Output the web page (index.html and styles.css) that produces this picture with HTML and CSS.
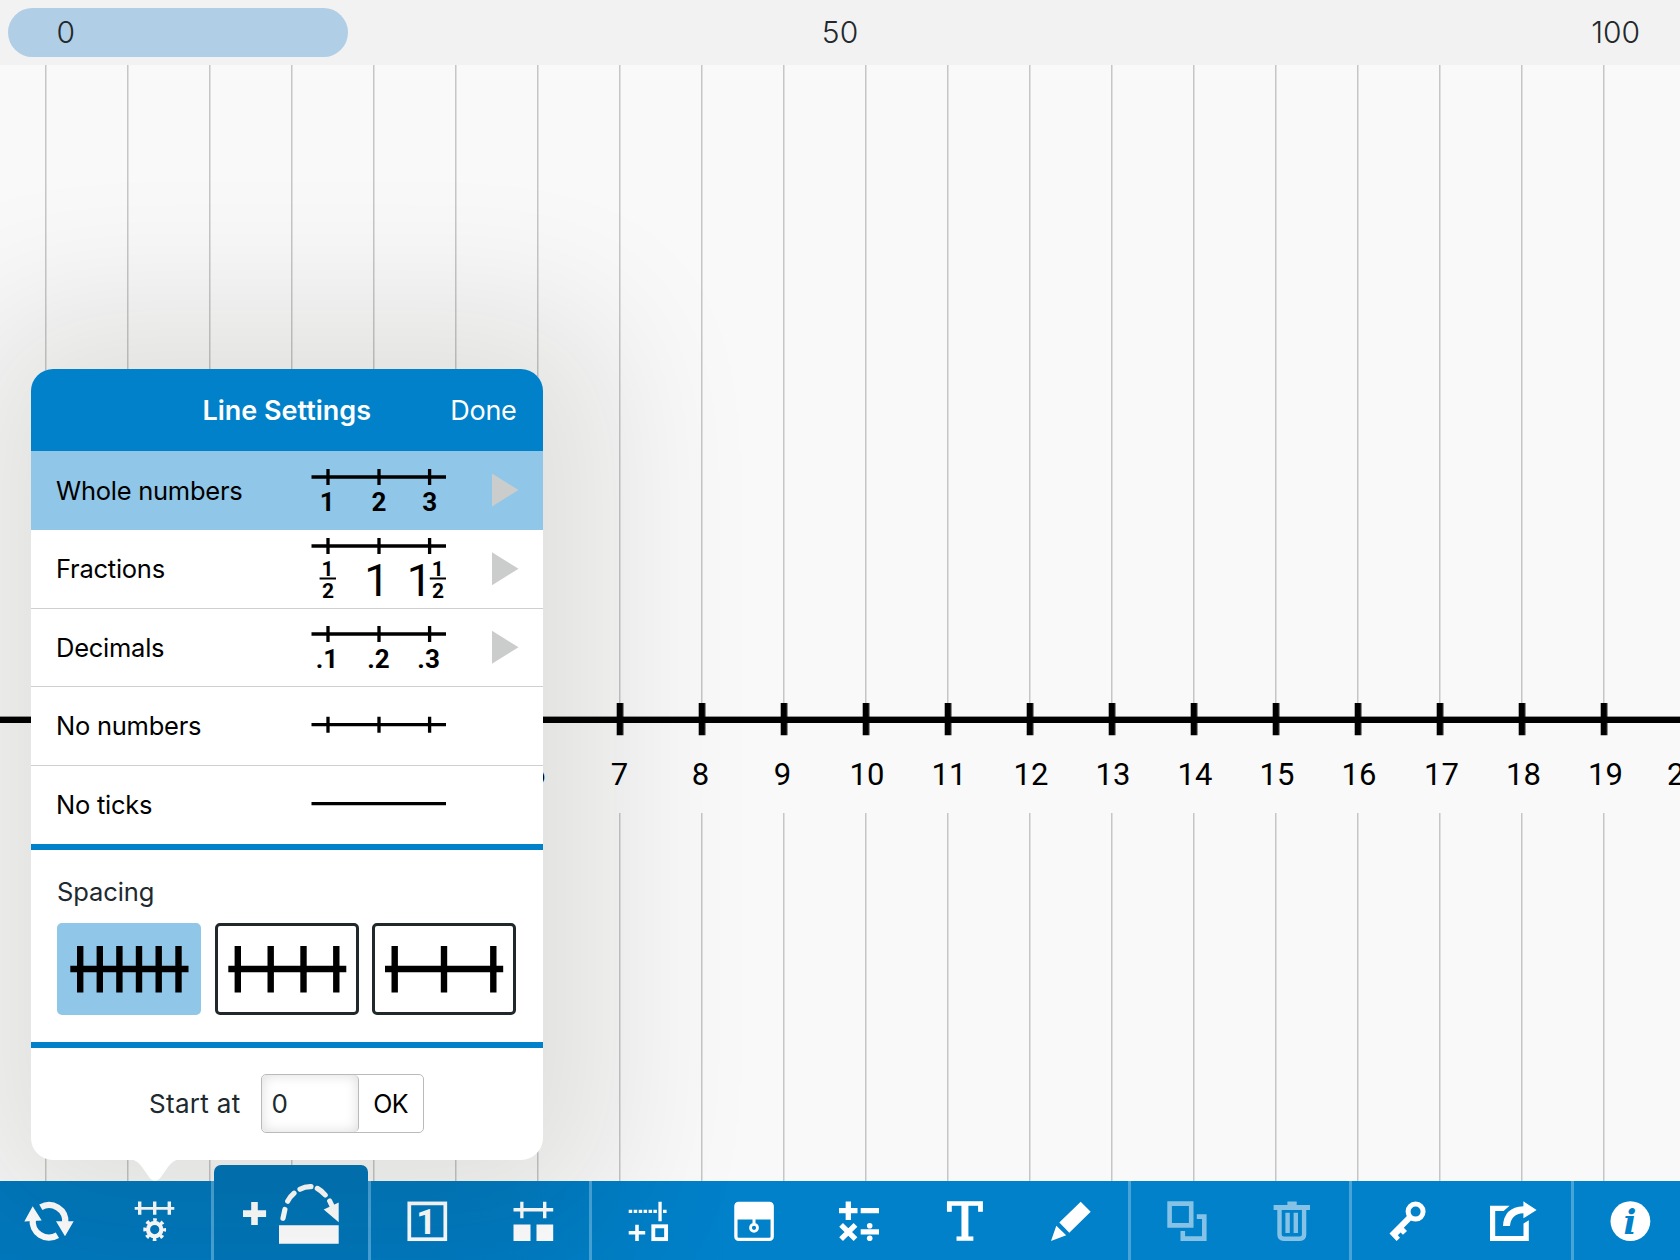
FILE: index.html
```html
<!DOCTYPE html>
<html lang="en">
<head>
<meta charset="utf-8">
<title>Number Line</title>
<link rel="stylesheet" href="styles.css">
</head>
<body>
<div class="app">
  <header class="overview">
    <div class="overview-window"></div>
    <span class="mark mark-start">0</span>
    <span class="mark mark-mid">50</span>
    <span class="mark mark-end">100</span>
  </header>

  <main class="canvas">
    <svg class="line-view" width="1680" height="1116" viewBox="0 65 1680 1116">
      <defs>
        <pattern id="grid" x="45" y="0" width="82" height="1260" patternUnits="userSpaceOnUse"><rect width="1.5" height="1260" fill="#c6c6c6"/></pattern>
        <pattern id="ticks" x="42.7" y="703" width="82" height="33" patternUnits="userSpaceOnUse"><rect width="6.6" height="32.5"/></pattern>
      </defs>
      <rect x="0" y="65" width="1680" height="638" fill="url(#grid)"/>
      <rect x="0" y="813" width="1680" height="368" fill="url(#grid)"/>
      <rect x="0" y="716.6" width="1680" height="6.4"/>
      <rect x="0" y="703" width="1680" height="32.5" fill="url(#ticks)"/>
      <g class="tick-labels">
        <text x="537" y="785">6</text><text x="619.5" y="785">7</text><text x="700.5" y="785">8</text>
        <text x="782.5" y="785">9</text><text x="867" y="785">10</text><text x="949" y="785">11</text>
        <text x="1031" y="785">12</text><text x="1113" y="785">13</text><text x="1195" y="785">14</text>
        <text x="1277" y="785">15</text><text x="1359" y="785">16</text><text x="1441.5" y="785">17</text>
        <text x="1523.5" y="785">18</text><text x="1605.5" y="785">19</text><text x="1684.5" y="785">20</text>
      </g>
    </svg>
  </main>

  <nav class="toolbar">
    <div class="group group-first">
      <svg class="icon" viewBox="0 0 50 40"><g fill="none" stroke="#fff" stroke-width="6.3"><path d="M8.8 18A16.3 16.3 0 0 0 33.4 34.2"/><path d="M16.8 6.3A16.3 16.3 0 0 1 41.2 22"/></g><path d="M8.7 5.3 17.7 19.6.3 20.6zM41 35.3 49.7 20.2 32 20.2z"/></svg>
      <svg class="icon" viewBox="0 0 50 40"><path d="M4.7 6h39.6v2.7H4.7zM8 .5h3.4v13.2H8zM23 .5h3.4v13.2H23zM37.6.5H41v13.2h-3.4z"/><g fill="none" stroke="#fff"><circle cx="24.7" cy="28.6" r="6.7" stroke-width="4.2"/><circle cx="24.7" cy="28.6" r="9.7" stroke-width="3.4" stroke-dasharray="3.6 4.018" stroke-dashoffset="1.8"/></g></svg>
    </div>
    <div class="group group-tab">
      <div class="jump-tab">
        <svg width="154" height="95" viewBox="0 0 154 95"><path d="M37.2 37h6.6v8.2h8.3v6.7h-8.3V60h-6.6v-8.1H29v-6.7h8.2zM65 60.2h59.7v18.5H65z"/><path d="M69 53.3 70.9 44.5M73.7 36.2Q76 31.5 80 28.2M86 24.3Q91 21.5 97 21.7M103.3 23.4Q108 26 111.2 30M115.7 36 119 43" fill="none" stroke="#fff" stroke-width="5.2" stroke-linecap="round"/><path d="M124.7 37.5V57.2L109.7 44.5z"/></svg>
      </div>
    </div>
    <div class="group">
      <svg class="icon" viewBox="0 0 50 40"><rect x="7.3" y="2.4" width="36" height="35.8" fill="none" stroke="#fff" stroke-width="3.7"/><text class="boxed-one" x="24.3" y="33.3">1</text></svg>
      <svg class="icon" viewBox="0 0 50 40"><path d="M5.5 7h39.7v3.4H5.5zM12.2.7h3.3v16.5h-3.3zM35 .7h3.4v16.5H35zM5.5 23.4h17V40h-17zM28.5 23.4h16.7V40H28.5z"/></svg>
    </div>
    <div class="group">
      <svg class="icon" viewBox="0 0 50 40"><path d="M5.7 8.8h3.5v3.3H5.7zM10.7 8.8h3.5v3.3h-3.5zM15.7 8.8h3.5v3.3h-3.5zM20.6 8.8h3.5v3.3h-3.5zM25.6 8.8h3.5v3.3h-3.5zM30.4 8.8h3.5v3.3h-3.5zM40 8.8h3.6v3.3H40zM35.4.7h3.3v19.6h-3.3zM12.2 23.7h3.6V30h6.4v3.5h-6.4V40h-3.6v-6.5H5.7V30h6.5z"/><rect x="30.3" y="25.3" width="12.8" height="12.8" fill="none" stroke="#fff" stroke-width="3.9"/></svg>
      <svg class="icon" viewBox="0 0 50 40"><rect x="6.9" y="2.3" width="36.3" height="36.1" rx="2.7" fill="none" stroke="#fff" stroke-width="3.3"/><path d="M6 2h38v16.4H6zM23.5 18h3v4.5h-3z"/><circle cx="25" cy="26.8" r="3.5" fill="none" stroke="#fff" stroke-width="2.8"/></svg>
      <svg class="icon" viewBox="0 0 50 40"><path d="M5 9.7h18.5M14.3.5v18.4M26.7 9.7H45M7.1 23.8 21.5 38.2M21.5 23.8 7.1 38.2M26.7 30.8H45" fill="none" stroke="#fff" stroke-width="5.3"/><circle cx="35.7" cy="24.7" r="2.8"/><circle cx="35.7" cy="37.2" r="2.8"/></svg>
      <svg class="icon" viewBox="0 0 50 40"><text class="letter-t" x="25" y="39.4">T</text></svg>
      <svg class="icon" viewBox="0 0 50 40"><path d="M34.7.7 44.7 10.7 23.3 31.7 13.3 21.5zM10.3 24.7 20.2 34.2 5 40z"/></svg>
    </div>
    <div class="group">
      <svg class="icon disabled" viewBox="0 0 50 40"><path d="M7.6 2.6h21.6v21.8H7.6zM34.8 15.6h7.5v22H20.8V30" fill="none" stroke="#fff" stroke-width="4.6"/></svg>
      <svg class="icon disabled" viewBox="0 0 50 40"><path d="M20.4.5h9.3V4H43v5H6.6V4h13.8zM18.4 11.8h4.4V32h-4.4zM26.6 11.8H31V32h-4.4z"/><path d="M12.5 9v24.5q0 4.3 4.3 4.3h16q4.3 0 4.3-4.3V9" fill="none" stroke="#fff" stroke-width="4.4"/></svg>
    </div>
    <div class="group">
      <svg class="icon" viewBox="0 0 50 40"><circle cx="32.6" cy="10.6" r="7.5" fill="none" stroke="#fff" stroke-width="5"/><path d="M24.9 14 6.5 32.4 13.6 40 17 36.7 14.8 34.3 17.6 31.6 20 33.8 24 30 20.8 26.8 29.2 18.2z"/></svg>
      <svg class="icon" viewBox="0 0 50 40"><path d="M20.6 4.8 14.6 10H6.2v25h28.3V22.6l5.3-3.3V40H1V4.8z"/><path d="M34.4.3 47.6 9 34.4 17.3V12.3Q22 13 21 24.9H14Q15 6 34.4 5.2z"/></svg>
    </div>
    <div class="group group-last">
      <svg class="icon" viewBox="0 0 50 40"><circle cx="25.4" cy="20.2" r="19.9"/><text class="info-i" x="25" y="33.3">i</text></svg>
    </div>
  </nav>

  <section class="popover">
    <div class="pop-head"><h1 class="pop-title">Line Settings</h1><span class="done">Done</span></div>
    <ul class="types">
      <li class="type selected"><span class="type-name">Whole numbers</span>
        <svg class="sample" viewBox="311 451 136 78"><path class="rule" d="M311.5 477H446M328 469v16M379 469v16M429.6 469v16"/><g class="digits"><text x="327.3" y="510.5">1</text><text x="379" y="510.5">2</text><text x="429.6" y="510.5">3</text></g></svg>
        <i class="arrow"></i></li>
      <li class="type"><span class="type-name">Fractions</span>
        <svg class="sample" viewBox="311 530 136 78"><path class="rule" d="M311.5 546H446M328 538v16M379 538v16M429.6 538v16"/><path class="bar" d="M319.6 578.5H336M429.8 578.5H446"/><g class="digits small"><text x="327.6" y="575.5">1</text><text x="328" y="598">2</text><text x="437.8" y="575.5">1</text><text x="438" y="598">2</text></g><g class="digits big"><text x="377" y="595.5">1</text><text x="419.5" y="595.5">1</text></g></svg>
        <i class="arrow"></i></li>
      <li class="type"><span class="type-name">Decimals</span>
        <svg class="sample" viewBox="311 608.5 136 78"><path class="rule" d="M311.5 634.5H446M328 626.5v16M379 626.5v16M429.6 626.5v16"/><g class="digits"><text x="327" y="668">.1</text><text x="378.4" y="668">.2</text><text x="428.6" y="668">.3</text></g></svg>
        <i class="arrow"></i></li>
      <li class="type"><span class="type-name">No numbers</span>
        <svg class="sample" viewBox="311 687 136 78"><path class="rule" d="M311.5 724.7H446M328 716.7v16M379 716.7v16M429.6 716.7v16"/></svg></li>
      <li class="type"><span class="type-name">No ticks</span>
        <svg class="sample" viewBox="311 766 136 78"><path class="rule" d="M311.5 803.6H446"/></svg></li>
    </ul>
    <div class="spacing">
      <h2 class="spacing-title">Spacing</h2>
      <div class="spacing-options">
        <div class="option chosen"><svg width="138" height="86" viewBox="60 926 138 86"><path d="M70.3 969H188.5M80.2 946v46.5M99.8 946v46.5M119.4 946v46.5M139 946v46.5M158.7 946v46.5M178.5 946v46.5"/></svg></div>
        <div class="option"><svg width="138" height="86" viewBox="217.7 926 138 86"><path d="M228 969H346M237.5 946v46.5M270.4 946v46.5M303.2 946v46.5M336 946v46.5"/></svg></div>
        <div class="option"><svg width="138" height="86" viewBox="375.3 926 138 86"><path d="M385.3 969H503.5M395 946v46.5M444.3 946v46.5M493.6 946v46.5"/></svg></div>
      </div>
    </div>
    <div class="start">
      <span class="start-label">Start at</span>
      <div class="start-control"><span class="start-value">0</span><span class="start-ok">OK</span></div>
    </div>
    <svg class="tail" width="56" height="22" viewBox="0 0 56 22"><path d="M0 0C8 0 11 3 15 8L22 18Q25 22 28 22T34 18L41 8C45 3 48 0 56 0z"/></svg>
  </section>
</div>
</body>
</html>
```
FILE: styles.css
```css
* { box-sizing: border-box; }
body { margin: 0; font-family: Inter, "Liberation Sans", sans-serif; }
h1, h2, ul { margin: 0; padding: 0; font-weight: inherit; list-style: none; }
svg { display: block; flex: none; }

.app { position: relative; width: 1680px; height: 1260px; overflow: hidden; display: flex; flex-direction: column; background: #f8f8f8; }

.overview { position: relative; z-index: 3; height: 65px; flex: none; display: grid; background: #f2f2f2; color: #22282b; font-size: 30px; line-height: 65px; }
.overview > * { grid-area: 1 / 1; }
.overview-window { width: 340px; height: 49px; margin: 8px; border-radius: 25px; background: #b0cee6; }
.mark { font-weight: 350; }
.mark-start { padding-left: 56.5px; }
.mark-mid { text-align: center; }
.mark-end { text-align: right; padding-right: 40px; }

.canvas { height: 1116px; flex: none; background: #f9f9f9; }
.tick-labels { font: 31px Roboto, "Liberation Sans", sans-serif; text-anchor: middle; fill: #000; }

.toolbar { height: 79px; flex: none; display: flex; background: linear-gradient(90deg, rgba(0, 40, 70, .09) 420px, rgba(0, 40, 70, 0) 740px) #0081ca; }
.group { display: flex; align-items: flex-start; gap: 55.7px; padding: 19.5px 0 0 31px; border-left: 3px solid #47a3d8; }
.group:nth-child(3) { width: 221px; }
.group:nth-child(4) { width: 538.5px; }
.group:nth-child(5) { width: 221.5px; }
.group:nth-child(6) { width: 221.5px; }
.group-first { width: 210.5px; padding-left: 24px; border-left: 0; }
.group-tab { width: 157.5px; padding: 0; }
.group-last { flex: 1; }
.jump-tab { width: 154px; height: 95px; margin-top: -16px; border-radius: 7px 7px 0 0; background: #0076b9; fill: #fff; }
.icon { width: 50px; height: 40px; overflow: visible; fill: #fff; }
.disabled { opacity: .52; }
.boxed-one { font: bold 35px Roboto, sans-serif; text-anchor: middle; }
.letter-t { font: 53px "DejaVu Serif", serif; text-anchor: middle; stroke: #fff; stroke-width: 1.6px; }
.info-i { font: italic bold 34px "DejaVu Serif", serif; text-anchor: middle; fill: #0081ca; }

.popover { position: absolute; z-index: 2; left: 31px; top: 369px; width: 511.5px; height: 790.5px; display: flex; flex-direction: column; border-radius: 22px; background: #fff; box-shadow: 8px 4px 150px 62px rgba(20, 20, 4, .105); color: #000; }
.tail { position: absolute; left: 96px; top: 790px; fill: #fff; }
.pop-head { height: 82px; flex: none; display: grid; grid-template-columns: 1fr auto 1fr; align-items: center; padding-right: 26px; padding-left: 26px; border-radius: 22px 22px 0 0; background: #0081ca; color: #fff; font-size: 27px; }
.pop-title { grid-column: 2; font-size: 27px; font-weight: 600; letter-spacing: 0; }
.done { justify-self: end; font-weight: 400; letter-spacing: -.3px; }
.types { flex: none; height: 392.5px; display: grid; grid-template-rows: 79px 78.5px 78.5px 78.5px 78px; }
.type { display: flex; align-items: center; padding: 0 24px 0 25px; border-bottom: 1px solid #cfcfcf; }
.type:last-child { border-bottom: 0; }
.type.selected { background: #90c6e7; border-bottom-color: #90c6e7; }
.type-name { width: 255px; font-size: 25.5px; letter-spacing: -.25px; }
.sample { width: 136px; height: 78px; }
.rule { fill: none; stroke: #000; stroke-width: 3.3px; }
.bar { stroke: #000; stroke-width: 2px; }
.digits { font: bold 26px Roboto, sans-serif; text-anchor: middle; }
.small { font-size: 21px; }
.big { font-size: 45px; font-weight: 400; }
.arrow { width: 26.5px; height: 33px; margin-left: 45px; background: #cbcdcc; clip-path: polygon(0 0, 100% 50%, 0 100%); }
.spacing { height: 204.5px; flex: none; padding: 27px 26px 0; border: solid #0081ca; border-width: 6.5px 0; color: #20292e; }
.spacing-title { height: 46.5px; line-height: 30px; font-size: 25.5px; letter-spacing: -.1px; }
.spacing-options { display: flex; gap: 13.7px; }
.option { width: 144px; height: 92px; overflow: hidden; border: 3px solid #20282c; border-radius: 5px; }
.option svg { fill: none; stroke: #000; stroke-width: 6.4px; }
.chosen { border-color: #90c6e7; background: #90c6e7; }
.start { flex: 1; display: flex; align-items: flex-start; padding: 26px 0 0 118px; color: #20292e; font-size: 26px; line-height: 60px; }
.start-label { width: 111.5px; letter-spacing: .3px; }
.start-control { display: flex; width: 163px; height: 59px; border: 1.5px solid #b9bbbb; border-radius: 5px; line-height: 58px; }
.start-value { width: 97px; padding-left: 10px; border-right: 1.5px solid #b9bbbb; border-radius: 5px; box-shadow: inset 0 0 13px rgba(0, 0, 0, .14); }
.start-ok { flex: 1; text-align: center; color: #000; font-size: 25px; letter-spacing: -.8px; }
```
